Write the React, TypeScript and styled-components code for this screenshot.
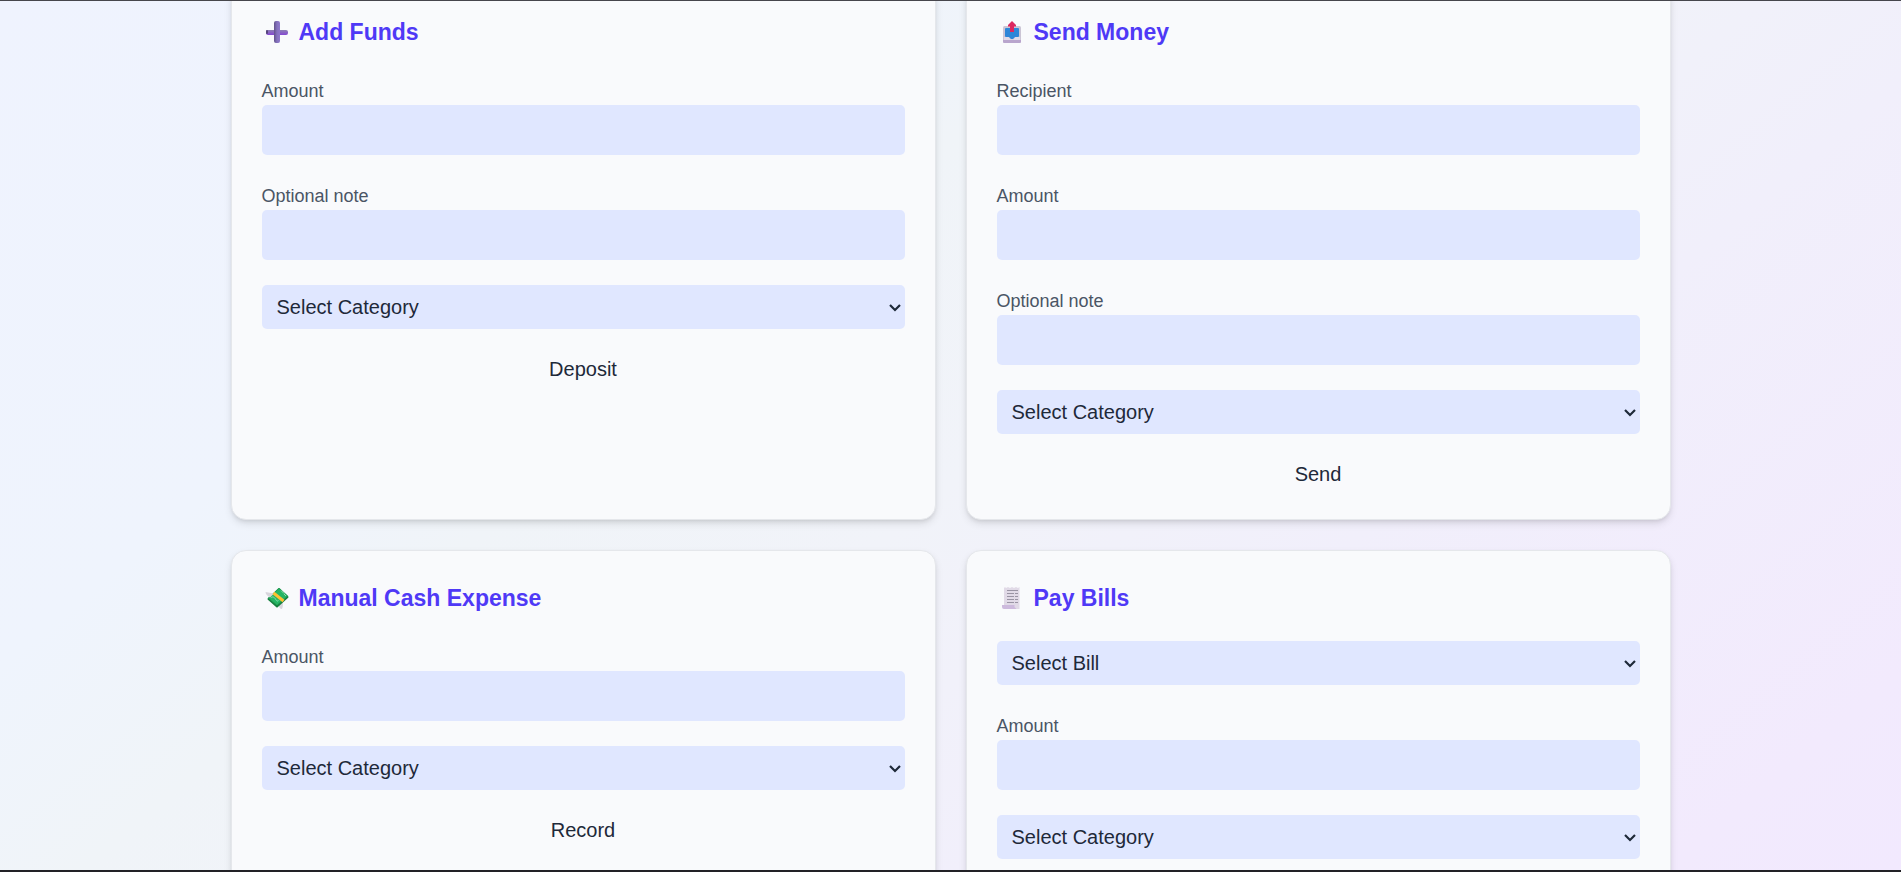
import React, { useId } from "react";
import styled, { createGlobalStyle } from "styled-components";

const GlobalStyle = createGlobalStyle`
  *, *::before, *::after { box-sizing: border-box; }
  body {
    margin: 0;
    background: #f1f5f9;
    color: #1e2939;
    font-family: "Liberation Sans", Arial, sans-serif;
    font-size: 20px;
    line-height: 30px;
  }
`;

const Page = styled.main`
  height: 100vh;
  overflow: hidden;
  border-top: 1px solid #46464c;
  border-bottom: 2px solid #222126;
  background: linear-gradient(140deg, #eff3fe, #eff4fd 27%, #f0f4f8 38%, #f1f3f9 52%, #f1effb 68%, #f2eafd 92%, #f2e9fe);
`;

const Board = styled.div`
  display: grid;
  grid-template-columns: repeat(2, minmax(0, 1fr));
  gap: 30px;
  max-width: 1440px;
  margin: -17px auto 0;
`;

const Card = styled.form`
  display: flex;
  flex-direction: column;
  gap: 25px;
  padding: 30px;
  border: 1px solid #e5e7eb;
  border-radius: 15px;
  background: #f9fafc;
  box-shadow: 0 4px 8px -1px rgba(0, 0, 0, 0.12), 0 2px 5px -2px rgba(0, 0, 0, 0.12);
`;

const Title = styled.h2`
  display: flex;
  align-items: center;
  gap: 7px;
  margin: 0;
  color: #4f39f6;
  font-size: 23px;
  font-weight: 700;
  line-height: 35px;

  svg {
    width: 30px;
    height: 23px;
    flex: none;
  }
`;

const FieldGroup = styled.div`
  display: flex;
  flex-direction: column;
  gap: 1px;
  padding-top: 4px;
`;

const Label = styled.label`
  color: #4a5565;
  font-size: 18px;
  line-height: 25px;
`;

const TextInput = styled.input`
  width: 100%;
  height: 50px;
  padding: 10px 15px;
  border: 0;
  border-radius: 5px;
  background: #e0e7ff;
  color: inherit;
  font: inherit;
`;

const SelectBox = styled.div`
  position: relative;
  flex: none;

  svg {
    position: absolute;
    top: 18px;
    right: 3px;
    pointer-events: none;
  }
`;

const Select = styled.select`
  display: block;
  appearance: none;
  width: 100%;
  height: 44px;
  padding: 0 15px;
  border: 0;
  border-radius: 5px;
  background: #e0e7ff;
  color: inherit;
  font: inherit;
`;

const SubmitButton = styled.button`
  width: 100%;
  height: 30px;
  padding: 0;
  border: 0;
  background: transparent;
  color: inherit;
  font: inherit;
  cursor: pointer;
`;

const PlusIcon = () => (
  <svg viewBox="0 1 30 23" aria-hidden="true">
    <defs>
      <linearGradient id="plus-h" x1="0" y1="0" x2="0" y2="1">
        <stop offset="0" stopColor="#8d80b4" />
        <stop offset="1" stopColor="#8447d2" />
      </linearGradient>
      <linearGradient id="plus-v" x1="0" y1="0" x2="1" y2="0">
        <stop offset="0" stopColor="#62518c" />
        <stop offset="0.5" stopColor="#8572bd" />
        <stop offset="1" stopColor="#8e78cc" />
      </linearGradient>
    </defs>
    <rect x="4" y="10" width="22" height="5" rx="2" fill="url(#plus-h)" />
    <rect x="4" y="10" width="2" height="4" rx="1" fill="#57457c" />
    <rect x="12" y="1" width="6" height="22" rx="2" fill="url(#plus-v)" />
  </svg>
);

const OutboxIcon = () => (
  <svg viewBox="0 1 30 23" aria-hidden="true">
    <rect x="6" y="6" width="18" height="17" rx="1.500" fill="#cbc5d5" />
    <path d="M6 20h18v1.500a1.500 1.500 0 0 1-1.500 1.500h-15a1.500 1.500 0 0 1-1.500-1.500z" fill="#b9a5cd" />
    <path d="M7 17h4.500l2 2.500h3l2-2.500h4.500v3H7z" fill="#dfd9e7" />
    <path d="M8 9a1 1 0 0 1 1-1h12a1 1 0 0 1 1 1v7a1 1 0 0 1-1 1h-3l-2 2h-2l-2-2H9a1 1 0 0 1-1-1z" fill="#2d86d8" />
    <path d="M15 1l4 4v1.500h-2v5.500h-4V6.500h-2V5z" fill="#dc2860" />
  </svg>
);

const CashIcon = () => (
  <svg viewBox="0 1 30 23" aria-hidden="true">
    <path d="M15 17l6-4c-1 3 1 6-1 10-2 0-3-2-3-3-1 0-2-1-2-3z" fill="#d8d6dc" />
    <path d="M17 3l8.500 8-10.500 9.500-8.500-7.500z" fill="#16803f" stroke="#16803f" strokeWidth="2" strokeLinejoin="round" />
    <path d="M17 2.500l8.500 7.500-10.500 9-8.500-7z" fill="#25b564" stroke="#25a558" strokeLinejoin="round" />
    <path d="M9.500 12c0-2 3-1 4 1s2 3 3 1M19 4.500l3 3M22 8l2 2" fill="none" stroke="#8bdcae" />
    <path d="M3.500 6l8.500 1.500-4 4c-2-1-4.500-3-4.500-5.500z" fill="#d8d6dc" />
    <path d="M11.500 7l10 8" stroke="#ffc032" strokeWidth="3" />
  </svg>
);

const ReceiptIcon = () => (
  <svg viewBox="0 1 30 23" aria-hidden="true">
    <path d="M7 2l1-1 1 1 2-1 2 1 2-1 2 1 2-1 2 1 1.500-1v22H7z" fill="#e1dae7" />
    <path d="M5 19h12.500v2l2 2H7a2 2 0 0 1-2-2z" fill="#cdbadd" />
    <path d="M10 4.500h11M10 7.500h11M10 10.500h11M10 13.500h11M10 16.500h11" stroke="#9a94a4" strokeWidth="1.200" />
    <path d="M17.500 6v12" stroke="#e1dae7" />
  </svg>
);

const Field = ({ label, type = "text" }: { label: string; type?: string }) => {
  const id = useId();
  return (
    <FieldGroup>
      <Label htmlFor={id}>{label}</Label>
      <TextInput id={id} type={type} />
    </FieldGroup>
  );
};

const Picker = ({ label }: { label: string }) => (
  <SelectBox>
    <Select aria-label={label} defaultValue="">
      <option value="">{label}</option>
    </Select>
    <svg width="14" height="10" viewBox="0 0 14 10" fill="none" aria-hidden="true">
      <path d="M2 2l5 5 5-5" stroke="#1e2939" strokeWidth="2.200" />
    </svg>
  </SelectBox>
);

export default function App() {
  return (
    <>
      <GlobalStyle />
      <Page>
        <Board>
          <Card>
            <Title><PlusIcon />Add Funds</Title>
            <Field label="Amount" type="number" />
            <Field label="Optional note" />
            <Picker label="Select Category" />
            <SubmitButton type="button">Deposit</SubmitButton>
          </Card>
          <Card>
            <Title><OutboxIcon />Send Money</Title>
            <Field label="Recipient" />
            <Field label="Amount" type="number" />
            <Field label="Optional note" />
            <Picker label="Select Category" />
            <SubmitButton type="button">Send</SubmitButton>
          </Card>
          <Card>
            <Title><CashIcon />Manual Cash Expense</Title>
            <Field label="Amount" type="number" />
            <Picker label="Select Category" />
            <SubmitButton type="button">Record</SubmitButton>
          </Card>
          <Card>
            <Title><ReceiptIcon />Pay Bills</Title>
            <Picker label="Select Bill" />
            <Field label="Amount" type="number" />
            <Picker label="Select Category" />
          </Card>
        </Board>
      </Page>
    </>
  );
}
